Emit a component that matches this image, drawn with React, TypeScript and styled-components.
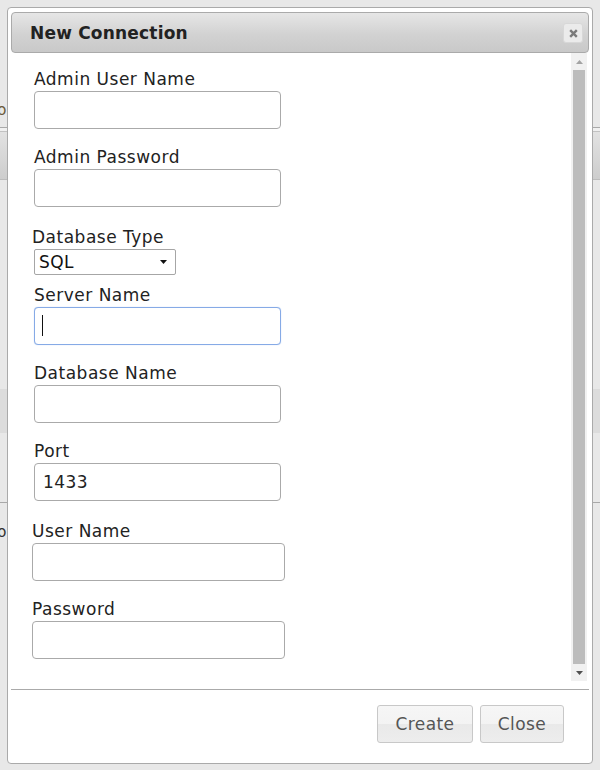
import React from 'react';
import styled, { createGlobalStyle } from 'styled-components';

const GlobalStyle = createGlobalStyle`
  html, body {
    margin: 0;
    padding: 0;
  }

  body {
    background: #e8e8e8;
    font-family: "DejaVu Sans", Verdana, sans-serif;
    color: #222;
  }
`;

const Page = styled.div`
  position: relative;
  width: 600px;
  height: 770px;
  overflow: hidden;
`;

// What is left of the page behind the modal
const Backdrop = styled.div`
  display: flex;
  flex-direction: column;
`;

const Stripe = styled.div<{ $h: number; $bg: string }>`
  height: ${p => p.$h}px;
  background: ${p => p.$bg};
  display: flex;
  align-items: flex-end;
  overflow: hidden;
`;

const BackdropText = styled.span<{ $color: string }>`
  margin-left: -22px;
  margin-bottom: 8px;
  font-size: 15px;
  line-height: 18px;
  color: ${p => p.$color};
  white-space: nowrap;
`;

const Dialog = styled.div`
  position: absolute;
  top: 7px;
  left: 7px;
  width: 586px;
  height: 757px;
  box-sizing: border-box;
  border: 1px solid #aaaaaa;
  border-radius: 4px;
  background: #ffffff;
  padding: 4px 3px 3px;
  display: flex;
  flex-direction: column;
`;

const TitleBar = styled.div`
  height: 41px;
  box-sizing: border-box;
  border: 1px solid #aaaaaa;
  border-radius: 4px;
  background: linear-gradient(#e6e6e6, #d2d2d2 55%, #c9c9c9);
  display: flex;
  align-items: center;
  justify-content: space-between;
  padding: 0 5px 0 18px;
`;

const Title = styled.span`
  font-size: 17px;
  letter-spacing: 0.2px;
  font-weight: bold;
  color: #222;
`;

const CloseIcon = styled.button`
  width: 20px;
  height: 20px;
  margin-top: 1px;
  padding: 0;
  border: 1px solid #d8d8d8;
  border-radius: 3px;
  background: #ebebeb;
  display: flex;
  align-items: center;
  justify-content: center;
`;

const Body = styled.div`
  flex: 1;
  display: flex;
  min-height: 0;
`;

const Form = styled.div`
  flex: 1;
  padding: 16px 0 0 23px;
  display: flex;
  flex-direction: column;
  align-items: flex-start;
  overflow: hidden;
`;

const Field = styled.div<{ $top: number; $shift?: number }>`
  margin-top: ${p => p.$top}px;
  margin-left: ${p => p.$shift || 0}px;
  display: flex;
  flex-direction: column;
`;

const Label = styled.label`
  font-size: 17px;
  letter-spacing: 0.5px;
  line-height: 20px;
  margin-bottom: 2px;
  color: #222;
`;

const InputWrap = styled.div`
  position: relative;
`;

const TextInput = styled.input<{ $wide?: boolean; $focused?: boolean }>`
  width: ${p => (p.$wide ? 253 : 247)}px;
  height: 38px;
  box-sizing: border-box;
  border: 1px solid ${p => (p.$focused ? '#86aae6' : '#aaaaaa')};
  box-shadow: ${p => (p.$focused ? '0 0 1px #a9c4ef' : 'none')};
  border-radius: 4px;
  padding: 0 8px;
  font-family: "DejaVu Sans", Verdana, sans-serif;
  font-size: 17px;
  letter-spacing: 0.4px;
  color: #222;
  outline: none;
  background: #fff;
`;

const Caret = styled.span`
  position: absolute;
  left: 8px;
  top: 8px;
  width: 1px;
  height: 21px;
  background: #111;
`;

const SelectBox = styled.div`
  width: 142px;
  height: 26px;
  margin-left: 2px;
  box-sizing: border-box;
  border: 1px solid #a6a6a6;
  border-radius: 2px;
  padding: 0 8px 0 4px;
  display: flex;
  align-items: center;
  justify-content: space-between;
  font-size: 17px;
  letter-spacing: 0.4px;
  color: #111;
  background: #fff;
`;

const Scrollbar = styled.div`
  width: 16px;
  margin-right: 2px;
  background: #f1f1f1;
  display: flex;
  flex-direction: column;
`;

const ScrollArrow = styled.div`
  height: 17px;
  display: flex;
  align-items: center;
  justify-content: center;
`;

const ScrollThumb = styled.div`
  flex: 1;
  margin: 0 2px;
  background: #bcbcbc;
`;

const ButtonPane = styled.div`
  margin-top: 8px;
  border-top: 1px solid #aaaaaa;
  padding: 15px 25px 17px;
  display: flex;
  justify-content: flex-end;
  gap: 7px;
`;

const Button = styled.button<{ $w: number }>`
  width: ${p => p.$w}px;
  height: 38px;
  border: 1px solid #c8c8c8;
  border-radius: 3px;
  background: linear-gradient(#f6f6f6, #f3f3f3 50%, #e9e9e9 51%, #ededed);
  font-family: "DejaVu Sans", Verdana, sans-serif;
  font-size: 17px;
  letter-spacing: 0.4px;
  color: #555;
  padding: 0;
`;

const Triangle = ({ up, color }: { up?: boolean; color: string }) => (
  <svg width="7" height="4" viewBox="0 0 7 4">
    <path d={up ? 'M0 4 L3.5 0 L7 4 Z' : 'M0 0 L3.5 4 L7 0 Z'} fill={color} />
  </svg>
);

const stripes = [
  { h: 127, bg: '#e8e8e8', text: 'Info', color: '#6b5a3a' },
  { h: 1, bg: '#a9a9a9' },
  { h: 3, bg: '#f0f0f0' },
  { h: 1, bg: '#c2c2c2' },
  { h: 47, bg: 'linear-gradient(#e2e2e2, #cdcdcd)' },
  { h: 1, bg: '#bcbcbc' },
  { h: 209, bg: '#e8e8e8' },
  { h: 44, bg: '#dcdcdc' },
  { h: 69, bg: '#e8e8e8' },
  { h: 1, bg: '#a8a8a8' },
  { h: 46, bg: '#e8e8e8', text: 'Info', color: '#333' },
  { h: 221, bg: '#e8e8e8' }
];

export default function App() {
  return (
    <>
      <GlobalStyle />
      <Page>
        <Backdrop>
          {stripes.map((s, i) => (
            <Stripe key={i} $h={s.h} $bg={s.bg}>
              {s.text && <BackdropText $color={s.color!}>{s.text}</BackdropText>}
            </Stripe>
          ))}
        </Backdrop>

        <Dialog>
          <TitleBar>
            <Title>New Connection</Title>
            <CloseIcon aria-label="close">
              <svg width="9" height="9" viewBox="0 0 9 9">
                <path
                  d="M1.2 1.2 L7.8 7.8 M7.8 1.2 L1.2 7.8"
                  stroke="#7b7b7b"
                  strokeWidth="2.4"
                />
              </svg>
            </CloseIcon>
          </TitleBar>

          <Body>
            <Form>
              <Field $top={0}>
                <Label>Admin User Name</Label>
                <TextInput type="text" />
              </Field>
              <Field $top={18}>
                <Label>Admin Password</Label>
                <TextInput type="password" />
              </Field>
              <Field $top={20} $shift={-2}>
                <Label>Database Type</Label>
                <SelectBox>
                  <span>SQL</span>
                  <Triangle color="#111" />
                </SelectBox>
              </Field>
              <Field $top={10}>
                <Label>Server Name</Label>
                <InputWrap>
                  <TextInput type="text" $focused />
                  <Caret />
                </InputWrap>
              </Field>
              <Field $top={18}>
                <Label>Database Name</Label>
                <TextInput type="text" />
              </Field>
              <Field $top={18}>
                <Label>Port</Label>
                <TextInput type="text" defaultValue="1433" />
              </Field>
              <Field $top={20} $shift={-2}>
                <Label>User Name</Label>
                <TextInput type="text" $wide />
              </Field>
              <Field $top={18} $shift={-2}>
                <Label>Password</Label>
                <TextInput type="password" $wide />
              </Field>
            </Form>
            <Scrollbar>
              <ScrollArrow>
                <Triangle up color="#a3a3a3" />
              </ScrollArrow>
              <ScrollThumb />
              <ScrollArrow>
                <Triangle color="#505050" />
              </ScrollArrow>
            </Scrollbar>
          </Body>

          <ButtonPane>
            <Button $w={96}>Create</Button>
            <Button $w={84}>Close</Button>
          </ButtonPane>
        </Dialog>
      </Page>
    </>
  );
}
